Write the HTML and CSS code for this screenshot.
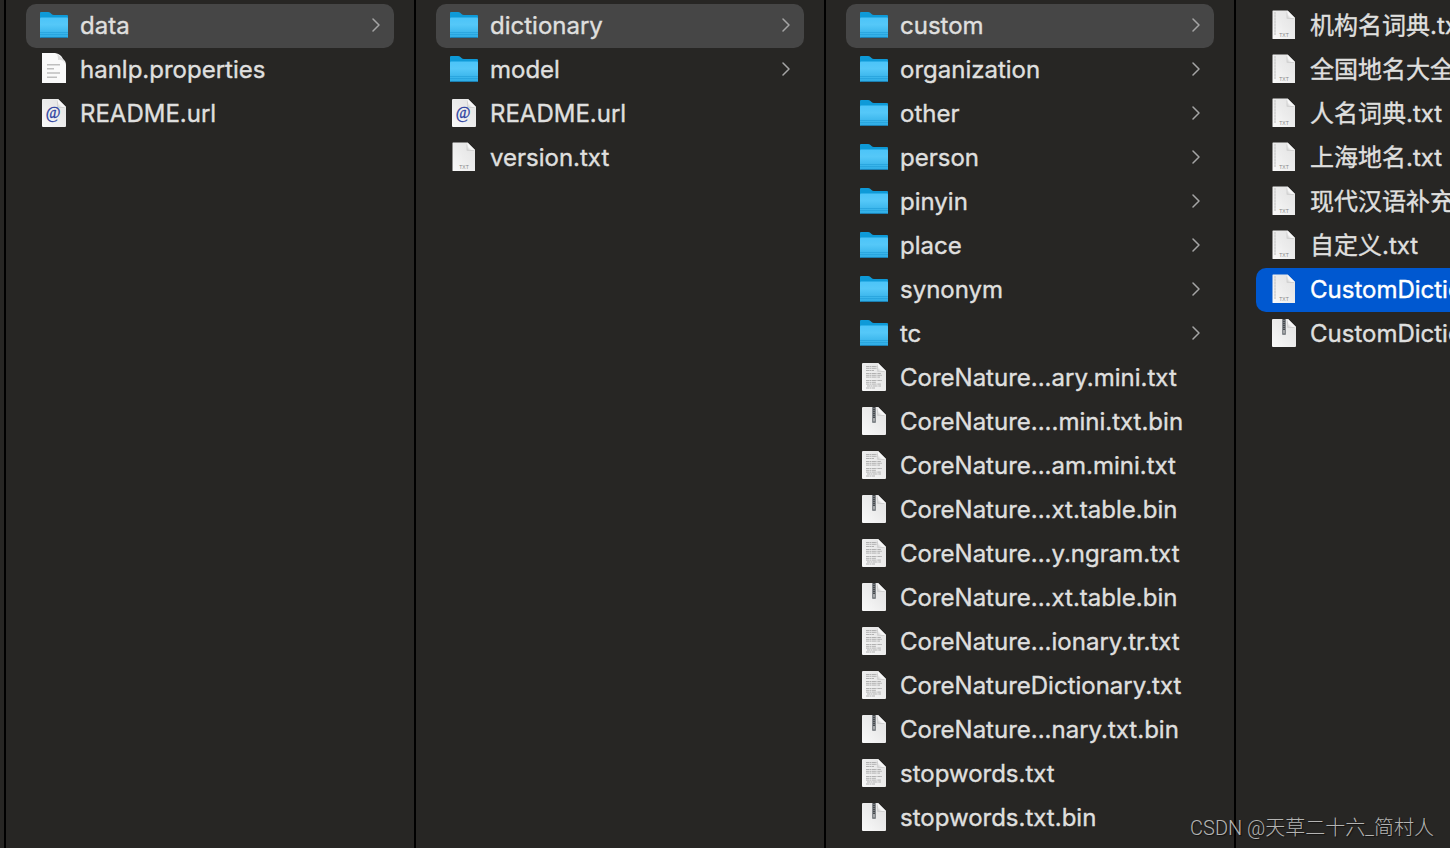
FILE: index.html
```html
<!DOCTYPE html>
<html lang="zh-CN">
<head>
<meta charset="utf-8">
<title>Finder</title>
<link rel="stylesheet" href="styles.css">
</head>
<body>
<svg class="defs" aria-hidden="true">
  <defs>
    <linearGradient id="blue" x1="0" y1="0" x2="0" y2="1"><stop offset="0" stop-color="#4cc4f8"/><stop offset=".35" stop-color="#55c8f8"/><stop offset="1" stop-color="#2cabe4"/></linearGradient>
    <linearGradient id="paper" x1="0" y1="1" x2="1" y2="0"><stop offset="0" stop-color="#fafafa"/><stop offset=".5" stop-color="#ececec"/><stop offset="1" stop-color="#e2e2e2"/></linearGradient>
    <linearGradient id="fold" x1="0" y1="1" x2="1" y2="0"><stop offset="0" stop-color="#cfcfcf"/><stop offset=".3" stop-color="#f6f6f6"/><stop offset="1" stop-color="#ffffff"/></linearGradient>
  </defs>
  <symbol id="folder" viewBox="0 0 28 36">
    <path d="M0 29V5q0-1 1-1h7q1.500 0 2.500 1l1 1q1 1 2.500 1h13q1 0 1 1v21z" fill="#0e9ad8"/>
    <path d="M0 10.500q0-1 1-1h26q1 0 1 1V29q0 1-1 1H1q-1 0-1-1z" fill="url(#blue)"/>
    <path d="M0 24.500h28M0 26.500h28" stroke="#209cd6" stroke-width=".6"/>
    <path d="M.5 29.500h27" stroke="#1c7fb2" stroke-width="1"/>
  </symbol>
  <symbol id="lines" viewBox="0 0 28 36">
    <path d="M2 1h13q6 1 8 6 3 2 3 6v18H2z" fill="#fafafa"/>
    <path d="M17 2q1 2 1 6 4-1 7 3-1-4-8-9z" fill="#dedede"/>
    <path d="M7 12.700h13M7 16.700h7M7 21h13M7 25.200h10" stroke="#bfbfbf" stroke-width="1.600"/>
  </symbol>
  <symbol id="wide" viewBox="0 0 28 36">
    <path d="M3 3h15l8 8v19q0 1-1 1H3q-1 0-1-1V4q0-1 1-1z" fill="url(#paper)"/>
    <path d="M17 5v6q0 1 1 1h7z" fill="#c4c4c4" opacity=".6"/>
    <path d="M18 3v7q0 1 1 1h7z" fill="url(#fold)"/>
  </symbol>
  <symbol id="url" viewBox="0 0 28 36">
    <use href="#wide"/>
    <text x="13" y="21.500" class="at" text-anchor="middle">@</text>
  </symbol>
  <symbol id="zip" viewBox="0 0 28 36">
    <use href="#wide"/>
    <path d="M12 3h4v15q0 1-1 1h-2q-1 0-1-1z" fill="#83878b"/>
    <path d="M14 3v11" stroke="#46494d" stroke-width="2" stroke-dasharray="1.300 .7"/>
    <path d="M13.500 14h1v3h-1z" fill="#c3c3c3"/>
  </symbol>
  <symbol id="dense" viewBox="0 0 28 36">
    <use href="#wide"/>
    <path d="M6 6.500h11M6 8.300h11M6 10.500h8M6 13.500h15M6 15.300h16M6 17.100h14M6 20.500h16M6 22.300h10M6 24.100h15M7 26h14M6 28h9" stroke="#aaa" stroke-width=".9" stroke-dasharray="3 .4 2 .5 4 .6 1 .3"/>
  </symbol>
  <symbol id="txt" viewBox="0 0 28 36">
    <path d="M3 2.500h14.500l7.500 7.500v21H3q-.5 0-.5-.5v-27.500Q2.500 2.500 3 2.500z" fill="url(#paper)"/>
    <path d="M16.500 4v6q0 1 1 1h7z" fill="#c4c4c4" opacity=".6"/>
    <path d="M17.500 2.500v6.500q0 1 1 1h6.500z" fill="url(#fold)"/>
    <text x="14" y="29" class="ext" text-anchor="middle">TXT</text>
  </symbol>
  <symbol id="txtside" viewBox="0 0 28 36">
    <use href="#txt"/>
    <path d="M5 4v23" stroke="#cecece" stroke-width="2" stroke-dasharray=".7 .6 1.200 .5"/>
  </symbol>
  <symbol id="chevron" viewBox="0 0 8 16"><path d="M1 2l6 6-6 6" fill="none" stroke="currentColor" stroke-width="1.500" stroke-linecap="round" stroke-linejoin="round"/></symbol>
</svg>
<main class="browser">
  <ul class="column">
    <li><button class="row open"><svg class="icon"><use href="#folder"/></svg><span class="name">data</span><svg class="chevron"><use href="#chevron"/></svg></button></li>
    <li><button class="row"><svg class="icon"><use href="#lines"/></svg><span class="name">hanlp.properties</span></button></li>
    <li><button class="row"><svg class="icon"><use href="#url"/></svg><span class="name">README.url</span></button></li>
  </ul>
  <ul class="column">
    <li><button class="row open"><svg class="icon"><use href="#folder"/></svg><span class="name">dictionary</span><svg class="chevron"><use href="#chevron"/></svg></button></li>
    <li><button class="row"><svg class="icon"><use href="#folder"/></svg><span class="name">model</span><svg class="chevron"><use href="#chevron"/></svg></button></li>
    <li><button class="row"><svg class="icon"><use href="#url"/></svg><span class="name">README.url</span></button></li>
    <li><button class="row"><svg class="icon"><use href="#txt"/></svg><span class="name">version.txt</span></button></li>
  </ul>
  <ul class="column">
    <li><button class="row open"><svg class="icon"><use href="#folder"/></svg><span class="name">custom</span><svg class="chevron"><use href="#chevron"/></svg></button></li>
    <li><button class="row"><svg class="icon"><use href="#folder"/></svg><span class="name">organization</span><svg class="chevron"><use href="#chevron"/></svg></button></li>
    <li><button class="row"><svg class="icon"><use href="#folder"/></svg><span class="name">other</span><svg class="chevron"><use href="#chevron"/></svg></button></li>
    <li><button class="row"><svg class="icon"><use href="#folder"/></svg><span class="name">person</span><svg class="chevron"><use href="#chevron"/></svg></button></li>
    <li><button class="row"><svg class="icon"><use href="#folder"/></svg><span class="name">pinyin</span><svg class="chevron"><use href="#chevron"/></svg></button></li>
    <li><button class="row"><svg class="icon"><use href="#folder"/></svg><span class="name">place</span><svg class="chevron"><use href="#chevron"/></svg></button></li>
    <li><button class="row"><svg class="icon"><use href="#folder"/></svg><span class="name">synonym</span><svg class="chevron"><use href="#chevron"/></svg></button></li>
    <li><button class="row"><svg class="icon"><use href="#folder"/></svg><span class="name">tc</span><svg class="chevron"><use href="#chevron"/></svg></button></li>
    <li><button class="row"><svg class="icon"><use href="#dense"/></svg><span class="name">CoreNature...ary.mini.txt</span></button></li>
    <li><button class="row"><svg class="icon"><use href="#zip"/></svg><span class="name">CoreNature....mini.txt.bin</span></button></li>
    <li><button class="row"><svg class="icon"><use href="#dense"/></svg><span class="name">CoreNature...am.mini.txt</span></button></li>
    <li><button class="row"><svg class="icon"><use href="#zip"/></svg><span class="name">CoreNature...xt.table.bin</span></button></li>
    <li><button class="row"><svg class="icon"><use href="#dense"/></svg><span class="name">CoreNature...y.ngram.txt</span></button></li>
    <li><button class="row"><svg class="icon"><use href="#zip"/></svg><span class="name">CoreNature...xt.table.bin</span></button></li>
    <li><button class="row"><svg class="icon"><use href="#dense"/></svg><span class="name">CoreNature...ionary.tr.txt</span></button></li>
    <li><button class="row"><svg class="icon"><use href="#dense"/></svg><span class="name">CoreNatureDictionary.txt</span></button></li>
    <li><button class="row"><svg class="icon"><use href="#zip"/></svg><span class="name">CoreNature...nary.txt.bin</span></button></li>
    <li><button class="row"><svg class="icon"><use href="#dense"/></svg><span class="name">stopwords.txt</span></button></li>
    <li><button class="row"><svg class="icon"><use href="#zip"/></svg><span class="name">stopwords.txt.bin</span></button></li>
  </ul>
  <ul class="column">
    <li><button class="row"><svg class="icon"><use href="#txtside"/></svg><span class="name">机构名词典.txt</span></button></li>
    <li><button class="row"><svg class="icon"><use href="#txtside"/></svg><span class="name">全国地名大全.txt</span></button></li>
    <li><button class="row"><svg class="icon"><use href="#txtside"/></svg><span class="name">人名词典.txt</span></button></li>
    <li><button class="row"><svg class="icon"><use href="#txtside"/></svg><span class="name">上海地名.txt</span></button></li>
    <li><button class="row"><svg class="icon"><use href="#txtside"/></svg><span class="name">现代汉语补充词库.txt</span></button></li>
    <li><button class="row"><svg class="icon"><use href="#txtside"/></svg><span class="name">自定义.txt</span></button></li>
    <li><button class="row selected"><svg class="icon"><use href="#txtside"/></svg><span class="name">CustomDictionary.txt</span></button></li>
    <li><button class="row"><svg class="icon"><use href="#zip"/></svg><span class="name">CustomDictionary.txt.bin</span></button></li>
  </ul>
</main>
<p class="watermark">CSDN @天草二十六_简村人</p>
</body>
</html>
```
FILE: styles.css
```css
* { box-sizing: border-box; }

body {
  margin: 0;
  background: #272624;
  color: #dfdfde;
  font-family: Inter, "Noto Sans CJK SC", sans-serif;
  overflow: hidden;
}

.defs { position: absolute; width: 0; height: 0; }

.browser {
  display: flex;
  min-height: 100vh;
  padding-left: 4px;
  overflow: hidden;
}

.column {
  flex: 0 0 410px;
  margin: 0;
  padding: 4px 20px;
  border-left: 2px solid #000;
  list-style: none;
}

.row {
  display: flex;
  align-items: center;
  gap: 12px;
  width: 100%;
  height: 44px;
  padding: 0 14px;
  border: 0;
  border-radius: 10px;
  background: none;
  color: inherit;
  font: inherit;
  font-size: 24px;
  line-height: 32px;
  text-align: left;
}

.row.open { background: #464646; }
.row.selected { background: #0058d0; color: #fff; }

.icon { flex: none; width: 28px; height: 36px; }
.name { flex: 1; white-space: nowrap; -webkit-text-stroke: 0.4px currentColor; }
.chevron { flex: none; width: 8px; height: 16px; margin-bottom: 2px; color: #a5a5a5; }

.at { font: 16px "Liberation Serif", serif; fill: #2c3fa0; stroke: #2c3fa0; stroke-width: .3px; }
.ext { font: 5px "Liberation Sans", sans-serif; fill: #888; }

.watermark {
  position: absolute;
  right: 16px;
  bottom: 5px;
  margin: 0;
  color: #b4b4b3;
  font: 20px/30px Roboto, "Noto Sans CJK SC", sans-serif;
  font-weight: 300;
  text-shadow: 1px 1px 1px #0008;
}
```
